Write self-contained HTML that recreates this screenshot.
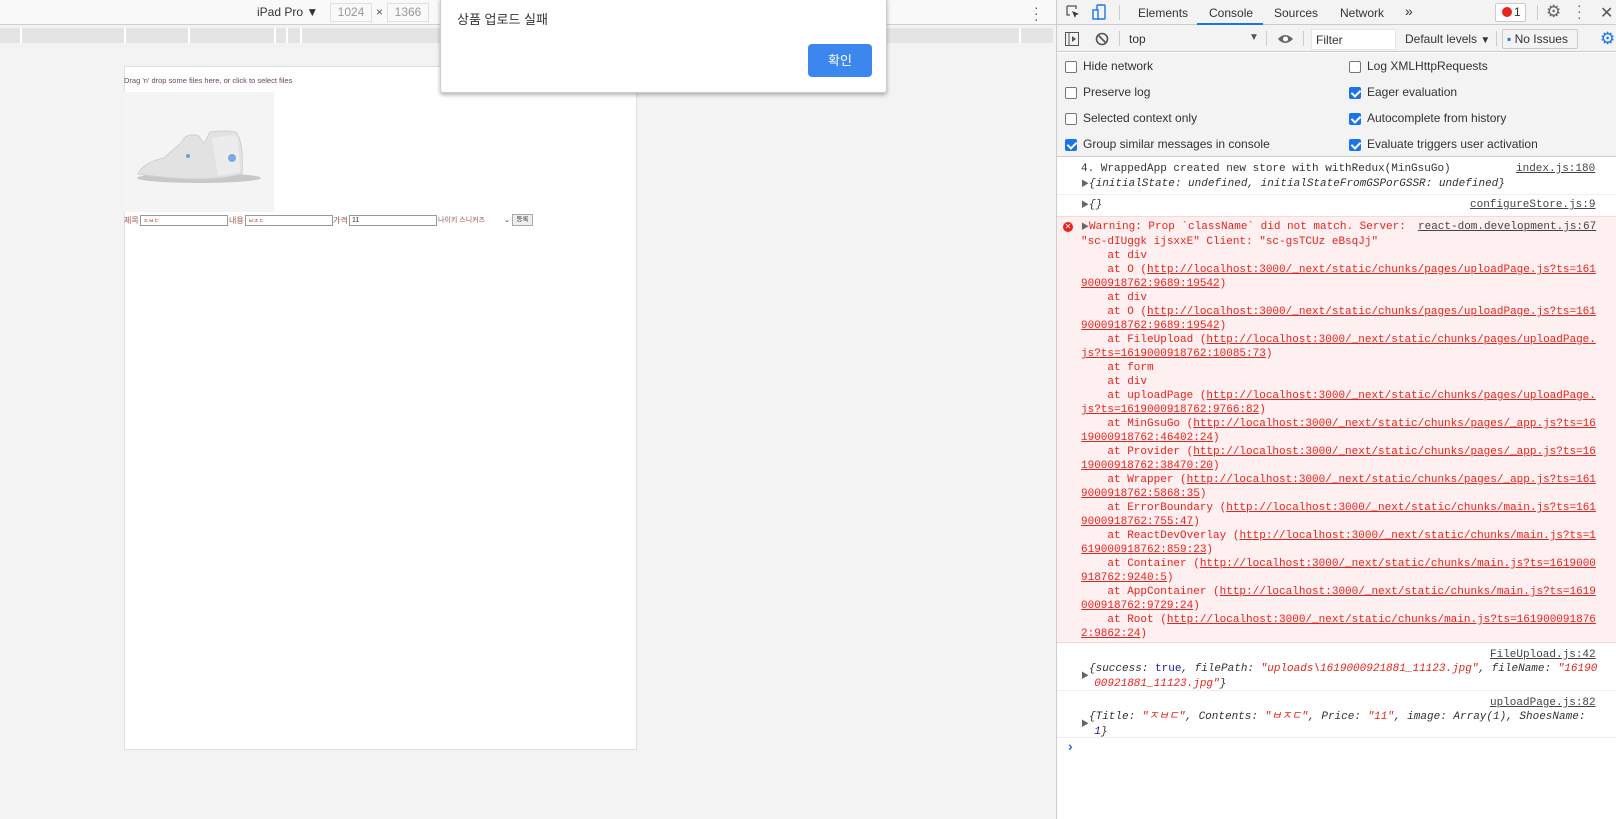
<!DOCTYPE html>
<html><head><meta charset="utf-8">
<style>
*{margin:0;padding:0;box-sizing:border-box}
body{width:1616px;height:819px;overflow:hidden;background:#f3f3f3;font-family:"Liberation Sans","Noto Sans CJK KR",sans-serif;position:relative;font-size:12px;color:#333}
.a{position:absolute}
.mono{font-family:"Liberation Mono","Noto Sans CJK KR",monospace;font-size:11px;line-height:14px;white-space:pre}
.u{text-decoration:underline}
.red{color:#e8231d}
.cb{position:absolute;width:12px;height:12px;border:1px solid #767676;border-radius:2px;background:#fff}
.cb.on{background:#1a73e8;border-color:#1a73e8}
.cb.on:after{content:"";position:absolute;left:3px;top:0px;width:4px;height:7px;border:solid #fff;border-width:0 2px 2px 0;transform:rotate(45deg)}
.lbl{position:absolute;font-size:12px;color:#333}
.link{color:#444;text-decoration:underline}
</style></head><body>
<div class="a" style="left:0;top:0;width:1056px;height:25px;background:#f9f9f9;border-bottom:1px solid #d0d0d0"></div>
<div class="a" style="left:257px;top:5px;font-size:12px;color:#333">iPad Pro ▼</div>
<div class="a" style="left:330px;top:3px;width:42px;height:19px;border:1px solid #e0e0e0;color:#999;font-size:12px;text-align:center;line-height:17px">1024</div>
<div class="a" style="left:376px;top:5px;color:#555">×</div>
<div class="a" style="left:387px;top:3px;width:42px;height:19px;border:1px solid #e0e0e0;color:#999;font-size:12px;text-align:center;line-height:17px">1366</div>
<div class="a" style="left:1034px;top:4px;color:#555;font-size:14px;line-height:6px">·<br>·<br>·</div>
<div class="a" style="left:0;top:28px;width:1053px;height:15px;background:#e4e4e4"></div>
<div class="a" style="left:20px;top:28px;width:2px;height:15px;background:#fff"></div>
<div class="a" style="left:124px;top:28px;width:2px;height:15px;background:#fff"></div>
<div class="a" style="left:188px;top:28px;width:2px;height:15px;background:#fff"></div>
<div class="a" style="left:274px;top:28px;width:2px;height:15px;background:#fff"></div>
<div class="a" style="left:286px;top:28px;width:2px;height:15px;background:#fff"></div>
<div class="a" style="left:300px;top:28px;width:2px;height:15px;background:#fff"></div>
<div class="a" style="left:1019px;top:28px;width:2px;height:15px;background:#fff"></div>
<div class="a" style="left:124px;top:66px;width:513px;height:684px;background:#fff;border:1px solid #e0e0e0"></div>
<div class="a" style="left:124px;top:76px;font-size:7.5px;color:#6b4848">Drag 'n' drop some files here, or click to select files</div>
<div class="a" style="left:124px;top:92px;width:150px;height:120px;background:#f4f4f4">
<svg width="150" height="120" viewBox="0 0 150 120"><ellipse cx="75" cy="86" rx="62" ry="5" fill="#c8c8c8"/><path d="M14 82 Q20 70 40 66 L58 50 Q62 40 75 44 L80 52 L86 40 Q100 38 112 40 Q120 50 118 82 Q80 92 14 82Z" fill="#e2e2e2" stroke="#d0d0d0"/><path d="M88 46 Q110 42 114 44 L116 80 L94 84Z" fill="#ececec"/><circle cx="108" cy="66" r="4" fill="#7fa7e0"/><circle cx="64" cy="64" r="2" fill="#6f9be0"/></svg></div>
<div class="a" style="left:124px;top:215px;font-size:8px;color:#a05050;line-height:12px;white-space:nowrap">제목</div>
<div class="a" style="left:140px;top:215px;width:88px;height:11px;border:1px solid #999;font-size:6px;color:#c44;padding-left:2px">ㅈㅂㄷ</div>
<div class="a" style="left:229px;top:215px;font-size:8px;color:#a05050;line-height:12px">내용</div>
<div class="a" style="left:245px;top:215px;width:88px;height:11px;border:1px solid #999;font-size:6px;color:#c44;padding-left:2px">ㅂㅈㄷ</div>
<div class="a" style="left:333px;top:215px;font-size:8px;color:#a05050;line-height:12px">가격</div>
<div class="a" style="left:349px;top:215px;width:88px;height:11px;border:1px solid #999;font-size:7px;color:#333;padding-left:2px;line-height:9px">11</div>
<div class="a" style="left:438px;top:215px;width:72px;height:11px;font-size:7px;color:#a05050;line-height:11px">나이키 스니커즈 <span style="float:right;color:#333">⌄</span></div>
<div class="a" style="left:512px;top:214px;width:21px;height:12px;border:1px solid #aaa;background:#eee;font-size:6.5px;text-align:center;line-height:10px">등록</div>
<div class="a" style="left:440px;top:-2px;width:447px;height:95px;background:#fff;border:1px solid #ccc;border-radius:0 0 3px 3px;box-shadow:0 2px 4px rgba(0,0,0,.3)"></div>
<div class="a" style="left:457px;top:9px;font-size:13px;color:#333">상품 업로드 실패</div>
<div class="a" style="left:808px;top:44px;width:64px;height:33px;background:#3b87ee;border-radius:4px;color:#fff;font-size:13px;text-align:center;line-height:33px">확인</div>
<div class="a" style="left:1056px;top:0;width:560px;height:819px;background:#fff;border-left:1px solid #ccc"></div>
<div class="a" style="left:1057px;top:0;width:559px;height:25px;background:#f3f3f3;border-bottom:1px solid #cbcbcb"></div>
<svg class="a" style="left:1066px;top:5px" width="14" height="14"><path d="M1 1h9v3M1 1v9h3" fill="none" stroke="#555" stroke-width="1.3"/><path d="M6 6l7 3-3 1-1 3z" fill="#333"/></svg>
<svg class="a" style="left:1092px;top:4px" width="14" height="16"><rect x="5" y="1" width="8" height="14" rx="1" fill="none" stroke="#1a73e8" stroke-width="1.4"/><rect x="1" y="6" width="5" height="9" fill="#fff" stroke="#1a73e8" stroke-width="1.4"/></svg>
<div class="a" style="left:1119px;top:5px;width:1px;height:15px;background:#ccc"></div>
<div class="a" style="left:1138px;top:6px;color:#333">Elements</div>
<div class="a" style="left:1209px;top:6px;color:#333">Console</div>
<div class="a" style="left:1197px;top:23px;width:66px;height:2px;background:#1a73e8"></div>
<div class="a" style="left:1274px;top:6px;color:#333">Sources</div>
<div class="a" style="left:1340px;top:6px;color:#333">Network</div>
<div class="a" style="left:1405px;top:3px;color:#333;font-size:14px">»</div>
<div class="a" style="left:1495px;top:3px;width:31px;height:19px;border:1px solid #ccc;border-radius:2px;background:#fff;font-size:12px;line-height:17px"><span style="display:inline-block;width:10px;height:10px;border-radius:50%;background:#e8231d;margin:0 2px 0 6px;vertical-align:-1px"></span>1</div>
<div class="a" style="left:1537px;top:5px;width:1px;height:15px;background:#ccc"></div>
<div class="a" style="left:1546px;top:2px;color:#666;font-size:17px">⚙</div>
<div class="a" style="left:1577px;top:2px;color:#666;font-size:14px;line-height:6px">·<br>·<br>·</div>
<div class="a" style="left:1600px;top:3px;color:#555;font-size:16px">✕</div>
<div class="a" style="left:1057px;top:25px;width:559px;height:27px;background:#f3f3f3;border-bottom:1px solid #cbcbcb"></div>
<svg class="a" style="left:1065px;top:32px" width="14" height="14"><rect x="0.5" y="0.5" width="13" height="13" fill="none" stroke="#555"/><path d="M4 1v12" stroke="#555"/><path d="M7 4l4 3-4 3z" fill="#555"/></svg>
<svg class="a" style="left:1095px;top:32px" width="14" height="14"><circle cx="7" cy="7" r="5.5" fill="none" stroke="#555" stroke-width="1.6"/><path d="M3 3l8 8" stroke="#555" stroke-width="1.6"/></svg>
<div class="a" style="left:1119px;top:31px;width:1px;height:15px;background:#ccc"></div>
<div class="a" style="left:1129px;top:32px;color:#333">top</div>
<div class="a" style="left:1249px;top:32px;color:#555;font-size:10px">▼</div>
<div class="a" style="left:1266px;top:31px;width:1px;height:15px;background:#ccc"></div>
<svg class="a" style="left:1277px;top:33px" width="17" height="12"><path d="M1 6Q8-2 16 6Q8 14 1 6z" fill="#666"/><circle cx="8.5" cy="6" r="2.5" fill="#fff"/></svg>
<div class="a" style="left:1303px;top:31px;width:1px;height:15px;background:#ccc"></div>
<div class="a" style="left:1311px;top:29px;width:85px;height:21px;background:#fff;border:1px solid #e6e6e6;padding:3px 4px;color:#333">Filter</div>
<div class="a" style="left:1405px;top:32px;color:#333">Default levels <span style="font-size:10px">▼</span></div>
<div class="a" style="left:1496px;top:31px;width:1px;height:15px;background:#ccc"></div>
<div class="a" style="left:1502px;top:29px;width:76px;height:20px;border:1px solid #ccc;border-radius:2px;padding:2px 4px;color:#333"><span style="color:#1a73e8">▪</span> No Issues</div>
<div class="a" style="left:1600px;top:29px;color:#1a73e8;font-size:17px">⚙</div>
<div class="a" style="left:1057px;top:53px;width:559px;height:104px;background:#f3f3f3;border-bottom:1px solid #ccc"></div>
<div class="cb" style="left:1065px;top:61px"></div><div class="lbl" style="left:1083px;top:59px">Hide network</div>
<div class="cb" style="left:1065px;top:87px"></div><div class="lbl" style="left:1083px;top:85px">Preserve log</div>
<div class="cb" style="left:1065px;top:113px"></div><div class="lbl" style="left:1083px;top:111px">Selected context only</div>
<div class="cb on" style="left:1065px;top:139px"></div><div class="lbl" style="left:1083px;top:137px">Group similar messages in console</div>
<div class="cb" style="left:1349px;top:61px"></div><div class="lbl" style="left:1367px;top:59px">Log XMLHttpRequests</div>
<div class="cb on" style="left:1349px;top:87px"></div><div class="lbl" style="left:1367px;top:85px">Eager evaluation</div>
<div class="cb on" style="left:1349px;top:113px"></div><div class="lbl" style="left:1367px;top:111px">Autocomplete from history</div>
<div class="cb on" style="left:1349px;top:139px"></div><div class="lbl" style="left:1367px;top:137px">Evaluate triggers user activation</div>
<div class="a mono" style="left:1081px;top:162px;color:#333">4. WrappedApp created new store with withRedux(MinGsuGo)</div>
<div class="a mono link" style="left:1516px;top:162px">index.js:180</div>
<div class="a mono" style="left:1081px;top:177px;color:#333;font-style:italic"><span style="font-style:normal;font-size:8px;color:#666">▶</span>{initialState: undefined, initialStateFromGSPorGSSR: undefined}</div>
<div class="a" style="left:1057px;top:194px;width:559px;height:1px;background:#eee"></div>
<div class="a mono" style="left:1081px;top:198px;color:#333;font-style:italic"><span style="font-style:normal;font-size:8px;color:#666">▶</span>{}</div>
<div class="a mono link" style="left:1470px;top:198px">configureStore.js:9</div>
<div class="a" style="left:1057px;top:216px;width:559px;height:427px;background:#fef0f0;border-top:1px solid #fbd6d6;border-bottom:1px solid #fbd6d6"></div>
<div class="a" style="left:1063px;top:222px;width:10px;height:10px;border-radius:50%;background:#e8231d;color:#fff;font-size:8px;line-height:10px;text-align:center">✕</div>
<div class="a mono red" style="left:1081px;top:220px"><span style="font-size:8px;color:#666">▶</span>Warning: Prop `className` did not match. Server:
"sc-dIUggk ijsxxE" Client: "sc-gsTCUz eBsqJj"
    at div
    at O (<span class="u">http://localhost:3000/_next/static/chunks/pages/uploadPage.js?ts=161</span>
<span class="u">9000918762:9689:19542</span>)
    at div
    at O (<span class="u">http://localhost:3000/_next/static/chunks/pages/uploadPage.js?ts=161</span>
<span class="u">9000918762:9689:19542</span>)
    at FileUpload (<span class="u">http://localhost:3000/_next/static/chunks/pages/uploadPage.</span>
<span class="u">js?ts=1619000918762:10085:73</span>)
    at form
    at div
    at uploadPage (<span class="u">http://localhost:3000/_next/static/chunks/pages/uploadPage.</span>
<span class="u">js?ts=1619000918762:9766:82</span>)
    at MinGsuGo (<span class="u">http://localhost:3000/_next/static/chunks/pages/_app.js?ts=16</span>
<span class="u">19000918762:46402:24</span>)
    at Provider (<span class="u">http://localhost:3000/_next/static/chunks/pages/_app.js?ts=16</span>
<span class="u">19000918762:38470:20</span>)
    at Wrapper (<span class="u">http://localhost:3000/_next/static/chunks/pages/_app.js?ts=161</span>
<span class="u">9000918762:5868:35</span>)
    at ErrorBoundary (<span class="u">http://localhost:3000/_next/static/chunks/main.js?ts=161</span>
<span class="u">9000918762:755:47</span>)
    at ReactDevOverlay (<span class="u">http://localhost:3000/_next/static/chunks/main.js?ts=1</span>
<span class="u">619000918762:859:23</span>)
    at Container (<span class="u">http://localhost:3000/_next/static/chunks/main.js?ts=1619000</span>
<span class="u">918762:9240:5</span>)
    at AppContainer (<span class="u">http://localhost:3000/_next/static/chunks/main.js?ts=1619</span>
<span class="u">000918762:9729:24</span>)
    at Root (<span class="u">http://localhost:3000/_next/static/chunks/main.js?ts=161900091876</span>
<span class="u">2:9862:24</span>)</div>
<div class="a mono link" style="left:1418px;top:220px">react-dom.development.js:67</div>
<div class="a mono link" style="left:1490px;top:648px">FileUpload.js:42</div>
<div class="a mono" style="left:1081px;top:662px;font-style:italic;color:#333"><span style="font-style:normal;font-size:8px;color:#666;position:relative;top:7px">▶</span>{success: <span style="color:#1a1aa6;font-style:normal">true</span>, filePath: <span class="red">"uploads\1619000921881_11123.jpg"</span>, fileName: <span class="red">"16190</span>
  <span class="red">00921881_11123.jpg"</span>}</div>
<div class="a" style="left:1057px;top:690px;width:559px;height:1px;background:#eee"></div>
<div class="a mono link" style="left:1490px;top:696px">uploadPage.js:82</div>
<div class="a mono" style="left:1081px;top:710px;font-style:italic;color:#333"><span style="font-style:normal;font-size:8px;color:#666;position:relative;top:7px">▶</span>{Title: <span class="red">"ㅈㅂㄷ"</span>, Contents: <span class="red">"ㅂㅈㄷ"</span>, Price: <span class="red">"11"</span>, image: Array(1), ShoesName:
  <span style="color:#1a1aa6">1</span>}</div>
<div class="a" style="left:1057px;top:737px;width:559px;height:1px;background:#eee"></div>
<div class="a" style="left:1068px;top:738px;color:#1a73e8;font-size:14px;font-weight:bold">›</div>
</body></html>
